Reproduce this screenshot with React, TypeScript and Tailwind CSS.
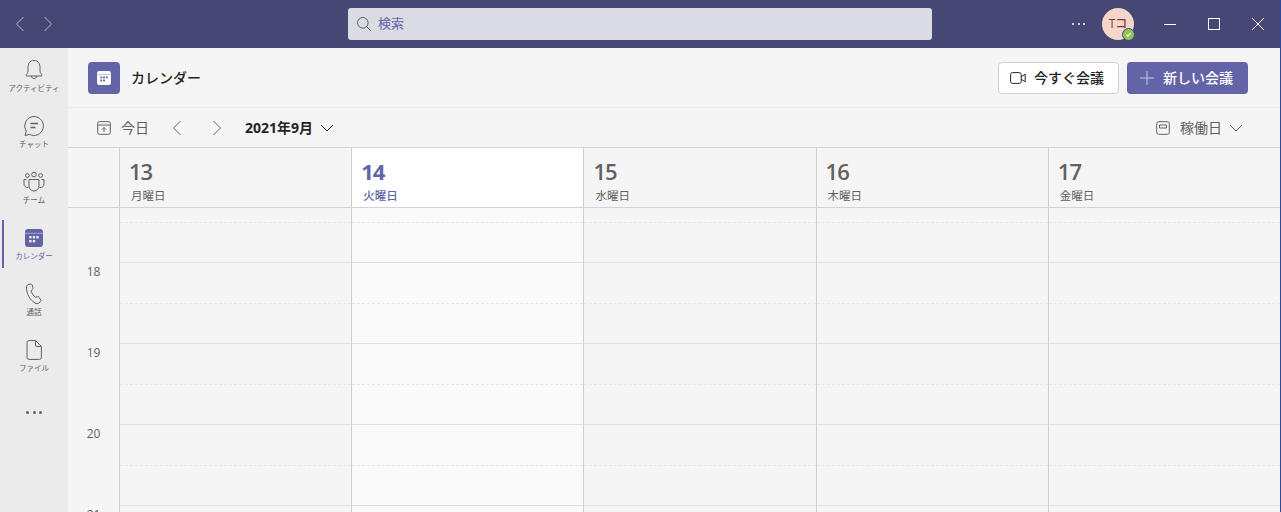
import React from "react";

const font = { fontFamily: '"Open Sans","Noto Sans CJK JP",sans-serif' };

function Chevron({ dir, className }: { dir: "l" | "r" | "d"; className?: string }) {
  const d = dir === "l" ? "M11.5 1 L4.5 8 L11.5 15" : dir === "r" ? "M4.5 1 L11.5 8 L4.5 15" : "M2 5 L8 11 L14 5";
  return (
    <svg viewBox="0 0 16 16" className={className} fill="none" stroke="currentColor" strokeWidth="1">
      <path d={d} />
    </svg>
  );
}

function CalIcon({ className, dots }: { className?: string; dots: string }) {
  return (
    <svg viewBox="0 0 18 18" className={className}>
      <path fill="currentColor" d="M3 0h12a3 3 0 0 1 3 3v12a3 3 0 0 1-3 3H3a3 3 0 0 1-3-3V3a3 3 0 0 1 3-3z" />
      <rect x="0" y="3.8" width="18" height="0.9" fill={dots} opacity="0.55" />
      <g fill={dots}>
        <rect x="4.2" y="7" width="2.4" height="2.4" />
        <rect x="7.8" y="7" width="2.4" height="2.4" />
        <rect x="11.4" y="7" width="2.4" height="2.4" />
        <rect x="4.2" y="11" width="2.4" height="2.4" />
        <rect x="7.8" y="11" width="2.4" height="2.4" />
      </g>
    </svg>
  );
}

const stroke = { fill: "none", stroke: "currentColor", strokeWidth: 1 } as const;

function NavItem({ icon, label, active }: { icon: React.ReactNode; label: string; active?: boolean }) {
  return (
    <div className="relative flex h-14 w-full flex-col items-center">
      {active && <div className="absolute left-[2px] top-[-6px] h-12 w-[2px] bg-[#6264a7]" />}
      <div className={`flex h-[24px] items-center justify-center ${active ? "text-[#6264a7]" : "text-[#616161]"}`}>{icon}</div>
      <div className={`whitespace-nowrap text-[7.5px] leading-[12px] ${active ? "text-[#6264a7]" : "text-[#616161]"}`}>{label}</div>
    </div>
  );
}

function Slot({ first }: { first?: boolean }) {
  return (
    <>
      <div className={`${first ? "h-[15px]" : "h-[41px]"} border-b border-dashed border-[#e6e6e6]`} />
      <div className="h-[40px] border-b border-[#e0e0e0]" />
    </>
  );
}

const days = [
  { n: "13", w: "月曜日" },
  { n: "14", w: "火曜日", today: true },
  { n: "15", w: "水曜日" },
  { n: "16", w: "木曜日" },
  { n: "17", w: "金曜日" },
];

export default function App() {
  return (
    <div className="flex h-[512px] w-[1281px] flex-col overflow-hidden border-r border-[#2b4a9b] bg-[#f5f5f5] text-[#252423]" style={font}>
      {/* title bar */}
      <div className="flex h-12 shrink-0 items-center bg-[#464775] text-white">
        <div className="flex w-[348px] items-center pl-[12px] text-[#b9bad0]">
          <Chevron dir="l" className="h-4 w-4" />
          <Chevron dir="r" className="ml-[12px] h-4 w-4" />
        </div>
        <div className="flex h-8 w-[584px] items-center rounded-[3px] bg-[#dbdbe4] pl-[8px]">
          <svg viewBox="0 0 16 16" className="h-[16px] w-[16px] text-[#616161]" {...stroke}>
            <circle cx="6.8" cy="6.8" r="5.3" />
            <path d="M10.7 10.7 L15 15" />
          </svg>
          <span className="ml-[6px] text-[13px] text-[#6264a7]">検索</span>
        </div>
        <div className="flex flex-1 items-center">
          <div className="ml-[140px] flex w-[13px] justify-between">
            <i className="h-[2px] w-[2px] rounded-full bg-white" />
            <i className="h-[2px] w-[2px] rounded-full bg-white" />
            <i className="h-[2px] w-[2px] rounded-full bg-white" />
          </div>
          <div className="relative ml-[17px] flex h-8 w-8 items-center justify-center rounded-full bg-[#f4d6cd] text-[12px] font-medium text-[#8a3a28]">
            Tコ
            <div className="absolute bottom-[-1px] right-[-1px] flex h-[13px] w-[13px] items-center justify-center rounded-full border border-[#464775] bg-[#92c353]">
              <svg viewBox="0 0 8 8" className="h-[7px] w-[7px]" fill="none" stroke="white" strokeWidth="1.2">
                <path d="M1.5 4.2 L3.3 6 L6.5 2.2" />
              </svg>
            </div>
          </div>
          <div className="ml-[30px] h-[1px] w-3 bg-white" />
          <div className="ml-[32px] h-3 w-3 border border-white" />
          <svg viewBox="0 0 12 12" className="ml-[32px] h-3 w-3" fill="none" stroke="white" strokeWidth="1">
            <path d="M0 0 L12 12 M12 0 L0 12" />
          </svg>
        </div>
      </div>

      <div className="flex min-h-0 flex-1">
        {/* rail */}
        <div className="flex w-[68px] shrink-0 flex-col items-center bg-[#ebebeb] pt-[10px]">
          <NavItem
            label="アクティビティ"
            icon={
              <svg viewBox="0 0 20 22" className="h-[22px] w-5" {...stroke}>
                <path d="M10 1.5 C5.5 1.5 4 5 4 8.5 V12 C4 14 2.5 15 2 16 C1.8 16.6 2.2 17 3 17 H17 C17.8 17 18.2 16.6 18 16 C17.5 15 16 14 16 12 V8.5 C16 5 14.5 1.5 10 1.5 Z" />
                <path d="M7.5 17 C7.5 20.5 12.5 20.5 12.5 17" />
              </svg>
            }
          />
          <NavItem
            label="チャット"
            icon={
              <svg viewBox="0 0 22 22" className="h-[22px] w-[22px]" {...stroke}>
                <path d="M11 1.5 A9.5 9.5 0 1 1 6.3 19.3 L2 20.5 L3.2 16.2 A9.5 9.5 0 0 1 11 1.5 Z" />
                <path d="M7.5 8.5 H15 M7.5 12.5 H12.5" strokeWidth="1.4" />
              </svg>
            }
          />
          <NavItem
            label="チーム"
            icon={
              <svg viewBox="0 0 22 22" className="h-[22px] w-[22px]" {...stroke}>
                <circle cx="11" cy="3.5" r="2.3" />
                <circle cx="4.4" cy="4.5" r="1.9" />
                <circle cx="17.6" cy="4.5" r="1.9" />
                <path d="M6 8.5 H16 V15 A5 5 0 0 1 6 15 Z" />
                <path d="M3.5 8.5 H1 V13 A3.5 3.5 0 0 0 5.5 16.4 M18.5 8.5 H21 V13 A3.5 3.5 0 0 1 16.5 16.4" />
              </svg>
            }
          />
          <NavItem active label="カレンダー" icon={<CalIcon className="h-[18px] w-[18px]" dots="#ebebeb" />} />
          <NavItem
            label="通話"
            icon={
              <svg viewBox="0 0 18 22" className="h-[22px] w-[18px]" {...stroke}>
                <path d="M3 1.5 L5.8 1 C6.5 1 7 1.4 7.2 2 L8 5 C8.2 5.7 7.9 6.2 7.4 6.6 L6 7.8 C6.5 10 8.5 13 10.5 14.2 L12.3 13.6 C13 13.4 13.6 13.6 14 14.2 L15.8 17 C16.2 17.6 16 18.3 15.5 18.7 L13.8 20 C12.8 20.8 11.3 20.8 10 20 C5 17 1.5 11 1.5 5 C1.5 3.5 2 2.2 3 1.5 Z" />
              </svg>
            }
          />
          <NavItem
            label="ファイル"
            icon={
              <svg viewBox="0 0 16 20" className="h-5 w-4" {...stroke}>
                <path d="M3 .6 H9.5 L15.4 6.5 V17.4 A2 2 0 0 1 13.4 19.4 H3 A2 2 0 0 1 1 17.4 V2.6 A2 2 0 0 1 3 .6 Z" />
                <path d="M9.5 .6 V5 A1.5 1.5 0 0 0 11 6.5 H15.4" />
              </svg>
            }
          />
          <div className="mt-[17px] flex w-4 justify-between">
            <i className="h-[3px] w-[3px] rounded-full bg-[#616161]" />
            <i className="h-[3px] w-[3px] rounded-full bg-[#616161]" />
            <i className="h-[3px] w-[3px] rounded-full bg-[#616161]" />
          </div>
        </div>

        {/* main */}
        <div className="flex min-w-0 flex-1 flex-col">
          {/* header */}
          <div className="flex h-[60px] shrink-0 items-center border-b border-[#ebebeb] pl-5 pr-[32px]">
            <div className="flex h-8 w-8 items-center justify-center rounded-[4px] bg-[#6264a7]">
              <CalIcon className="h-[14px] w-[14px] text-white" dots="#6264a7" />
            </div>
            <div className="ml-[11px] text-[14px] font-medium text-[#252423]">カレンダー</div>
            <div className="flex-1" />
            <div className="flex h-8 w-[121px] items-center rounded-[4px] border border-[#d1d1d1] bg-white pl-[11px] text-[14px] font-medium">
              <svg viewBox="0 0 16 12" className="mr-[8px] h-3 w-4" {...stroke}>
                <rect x=".6" y=".6" width="10.6" height="10.8" rx="2" />
                <path d="M11.2 4.8 L15.2 2.2 V9.8 L11.2 7.2" />
              </svg>
              今すぐ会議
            </div>
            <div className="ml-2 flex h-8 w-[121px] items-center rounded-[4px] bg-[#6264a7] pl-[13px] text-[14px] font-medium text-white">
              <svg viewBox="0 0 14 14" className="mr-[9px] h-[14px] w-[14px] text-[#c8c9e2]" fill="none" stroke="currentColor" strokeWidth="1">
                <path d="M7 0 V14 M0 7 H14" />
              </svg>
              新しい会議
            </div>
          </div>

          {/* toolbar */}
          <div className="flex h-[40px] shrink-0 items-center border-b border-[#d4d4d4] pr-[36px] text-[14px] text-[#616161]">
            <svg viewBox="0 0 14 14" className="ml-[29px] h-[14px] w-[14px]" fill="none" stroke="currentColor" strokeWidth="1">
              <rect x=".7" y=".7" width="12.6" height="12.6" rx="1.5" />
              <path d="M.7 4 H13.3 M7 6.5 V11 M5 8.5 L7 6.5 L9 8.5" />
            </svg>
            <span className="ml-[10px]">今日</span>
            <Chevron dir="l" className="ml-[20px] h-4 w-4" />
            <Chevron dir="r" className="ml-[24px] h-4 w-4" />
            <span className="ml-[20px] whitespace-nowrap text-[14px] font-bold text-[#252423]">2021年9月</span>
            <Chevron dir="d" className="ml-[6px] h-4 w-4 text-[#252423]" />
            <div className="flex-1" />
            <svg viewBox="0 0 14 14" className="h-[14px] w-[14px]" fill="none" stroke="currentColor" strokeWidth="1">
              <rect x=".7" y=".7" width="12.6" height="12.6" rx="2" />
              <path d="M3.5 4 H10.5 V7 H3.5 Z" />
            </svg>
            <span className="ml-[10px]">稼働日</span>
            <Chevron dir="d" className="ml-[6px] h-4 w-4" />
          </div>

          {/* day header */}
          <div className="grid h-[60px] shrink-0 grid-cols-[51px_repeat(5,1fr)] border-b border-[#d4d4d4]">
            <div />
            {days.map((d) => (
              <div key={d.n} className={`border-l border-[#cfcfcf] pl-[10px] pt-[9px] ${d.today ? "bg-white text-[#6264a7]" : "text-[#616161]"}`}>
                <div className={`ml-[-1px] text-[22px] leading-[28px] tracking-[-1px] ${d.today ? "font-bold" : "font-semibold"}`}>{d.n}</div>
                <div className={`ml-[1px] mt-[3px] text-[11.5px] leading-[16px] ${d.today ? "font-medium" : ""}`}>{d.w}</div>
              </div>
            ))}
          </div>

          {/* body */}
          <div className="grid min-h-0 flex-1 grid-cols-[51px_repeat(5,1fr)] overflow-hidden">
            <div className="text-center text-[12px] leading-[16px] text-[#616161]">
              <div className="h-[55px]" />
              {["18", "19", "20", "21"].map((h) => (
                <div key={h} className="h-[81px] pt-[1px]">
                  {h}
                </div>
              ))}
            </div>
            {days.map((d) => (
              <div key={d.n} className={`border-l border-[#cfcfcf] ${d.today ? "bg-[#fafafa]" : ""}`}>
                <Slot first />
                <Slot />
                <Slot />
                <Slot />
              </div>
            ))}
          </div>
        </div>
      </div>
    </div>
  );
}
